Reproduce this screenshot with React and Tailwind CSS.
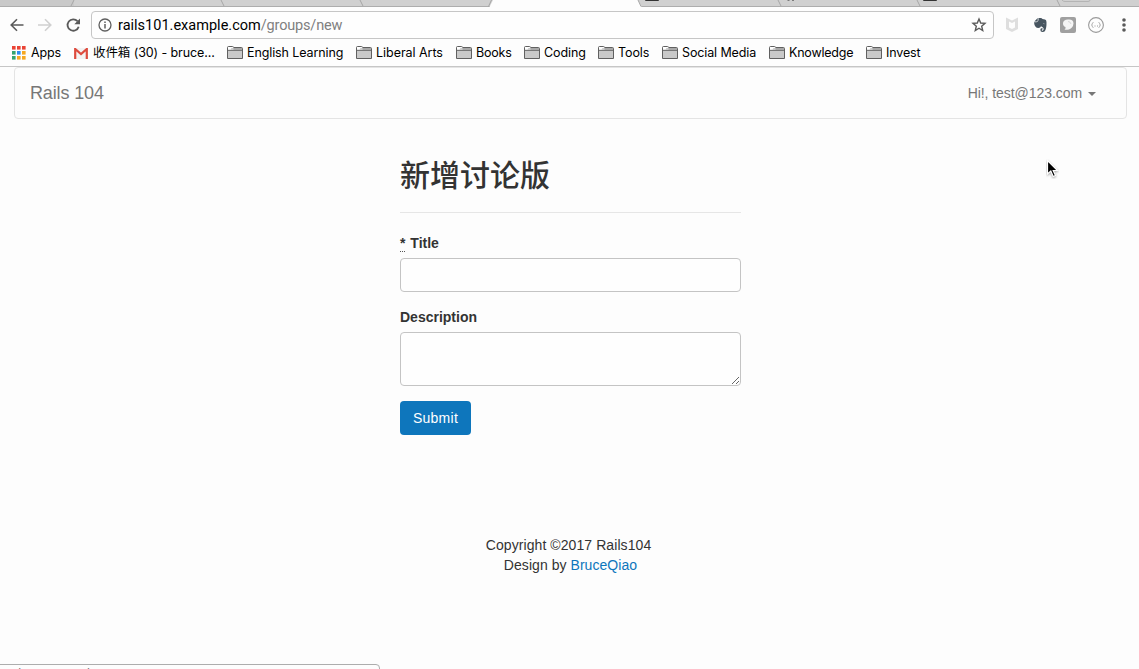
import React from "react";

const folders = [
  { label: "English Learning", width: "w-[129px]", track: "tracking-[-0.1px]" },
  { label: "Liberal Arts", width: "w-[100px]", track: "tracking-[-0.04px]" },
  { label: "Books", width: "w-[68px]", track: "tracking-[-0.2px]" },
  { label: "Coding", width: "w-[74px]", track: "tracking-[-0.1px]" },
  { label: "Tools", width: "w-[64px]", track: "tracking-[-0.1px]" },
  { label: "Social Media", width: "w-[107px]", track: "tracking-[-0.12px]" },
  { label: "Knowledge", width: "w-[97px]", track: "tracking-[-0.22px]" },
  { label: "Invest", width: "w-[70px]", track: "tracking-[-0.15px]" },
];

function TabStrip() {
  return (
    <svg className="block h-[7px] w-full shrink-0" viewBox="0 0 1139 7" aria-hidden="true">
      <rect width="1139" height="7" fill="#d0d0d0" />
      <rect width="74" height="6" fill="#c9c9c9" />
      <path d="M0 6.500H1139" stroke="#adadad" />
      <path d="M489.500 7L493 0H638L641.500 7Z" fill="#fdfdfd" />
      <path d="M71 6L74 0M221 0L224 6M360 0L363 6M488.500 6.500L491.500 0M638 0L641 6.500M778 0L781 6M917 0L920 6M1057 0L1060 6" fill="none" stroke="#a6a6a6" />
      <path d="M645 0h14v0.500q-1 .5-2 .5h-10q-1 0-2-.5zM923 0h14v0.500q-1 .5-2 .5h-10q-1 0-2-.5z" fill="#333" />
      <path d="M787.500 .3h2M792 .3h2" stroke="#666" />
      <path d="M1062 0q1 1.500 3 1.500h23q2 0 2-1.500" fill="none" stroke="#b4b4b4" />
    </svg>
  );
}

function FolderIcon() {
  return (
    <svg className="mb-px block h-[13px] w-4 shrink-0" viewBox="0 0 16 13" aria-hidden="true">
      <path d="M.5 12.500V1.500Q.5.500 1.500.500H5.500L7 1.500H14.500Q15.500 1.500 15.500 2.500V12.500Z" fill="#c9c9c9" stroke="#606060" />
      <path d="M6.500 2H15V4H6.500Z" fill="#a8a8a8" />
      <path d="M1 3.500V1H5.500L6.500 2H4.500L3.500 3.500Z" fill="#fff" />
      <path d="M1 4.500H15" stroke="#777" />
    </svg>
  );
}

function AppsIcon() {
  const colors = ["#ea4335", "#ea4335", "#ea4335", "#34a46f", "#2d8cf0", "#f6a821", "#34a46f", "#f6a821", "#f6a821"];
  return (
    <svg className="mb-px block h-[14px] w-[14px] shrink-0" viewBox="0 0 14 14" aria-hidden="true">
      {colors.map((c, i) => (
        <rect key={i} x={(i % 3) * 5} y={Math.floor(i / 3) * 5} width="3.600" height="3.600" fill={c} />
      ))}
    </svg>
  );
}

function Toolbar() {
  return (
    <div className="flex h-[33px] shrink-0 items-start pt-1">
      <svg className="block h-7 w-[91px] shrink-0" viewBox="0 0 91 28" fill="none" aria-hidden="true">
        <path d="M23.500 14H11.500M17 8.200L11.200 14L17 19.800" stroke="#5a5a5a" strokeWidth="1.600" />
        <path d="M38 14H50.500M45 8.200L50.800 14L45 19.800" stroke="#d0d0d0" strokeWidth="1.600" />
        <path d="M77.500 10.200A5.700 5.700 0 1 0 78.700 15.700" stroke="#5a5a5a" strokeWidth="1.800" />
        <path d="M80 7.500V13.200H74.300Z" fill="#5a5a5a" />
      </svg>
      <div className="flex h-7 w-[903px] shrink-0 items-center rounded-[4px] border border-[#c6c6c6] bg-[#fefefe] pl-[6px] pr-[6px]">
        <svg className="block h-[14px] w-[14px]" viewBox="0 0 14 14" fill="none" aria-hidden="true">
          <circle cx="7" cy="7" r="6" stroke="#5f5f5f" strokeWidth="1.300" />
          <path d="M7 6V10.500M7 3.500V5" stroke="#5f5f5f" strokeWidth="1.500" />
        </svg>
        <div className="ml-[6px] flex-1 whitespace-nowrap pt-px font-[Roboto,sans-serif] text-[14.500px] leading-[20px] text-black">
          <span className="tracking-[0.01px]">rails101.example.com</span>
          <span className="tracking-[-0.17px] text-[#808080]">/groups/new</span>
        </div>
        <svg className="block h-4 w-4" viewBox="0 0 16 16" fill="none" aria-hidden="true">
          <path d="M8 2L9.700 6L14 6.400L10.700 9.200L11.700 13.500L8 11.200L4.300 13.500L5.300 9.200L2 6.400L6.300 6Z" stroke="#5a5a5a" strokeWidth="1.400" />
        </svg>
      </div>
      <svg className="block h-7 w-[145px] shrink-0" viewBox="0 0 145 28" fill="none" aria-hidden="true">
        <path d="M12 6.500L18 9.500L24 6.500V18L18 21L12 18Z" fill="#dedede" />
        <path d="M15 10.500L18 12L21 10.500V16.500L18 18L15 16.500Z" fill="#fdfdfd" />
        <path d="M43.500 7.200L40.300 10.400H43Q43.700 10.400 43.700 9.700V7H46.500Q48 7 48.500 8L51 8.500Q52.400 8.800 52.500 11Q52.700 17 51 20Q50.300 21 48.500 21Q46.300 21 46.300 18.800Q46.300 17 48.500 17V18.500Q47.600 18.500 47.700 19.200Q48 20 49 19.500Q50 18.800 49.500 17.200Q48.400 15.800 47 15.200Q46.500 17 44.500 17Q40.500 17 40 11.200L42.500 11.200Q44.400 11 44.500 9V7Z" fill="#475560" />
        <path d="M48.800 12.800Q50.200 11.500 50.700 13.200Z" fill="#aeb5ba" />
        <rect x="66" y="6" width="16" height="16" rx="2" fill="#a0a0a0" />
        <path d="M69 12Q69.500 8.500 74 8.500Q79.500 8 79.500 12.500Q79 17 75 18.500Q72 19 70.500 18.500Q72 17.500 71.500 16Q68.800 15 69 12Z" fill="#f5f5f5" />
        <path d="M74 10.500Q76.500 10.500 77 13" stroke="#d7d7d7" />
        <circle cx="102" cy="14" r="7.400" stroke="#9a9a9a" strokeWidth="1.100" />
        <path d="M99.500 11.500Q98.300 11.500 98.300 12.700Q98.300 14 97.500 14Q98.300 14 98.300 15.300Q98.300 16.500 99.500 16.500M104.500 11.500Q105.700 11.500 105.700 12.700Q105.700 14 106.500 14Q105.700 14 105.700 15.300Q105.700 16.500 104.500 16.500" stroke="#9a9a9a" strokeWidth=".8" />
        <path d="M100.500 15h1M103 15h1" stroke="#999" />
        <g fill="#5a5a5a"><circle cx="130" cy="9" r="1.800" /><circle cx="130" cy="14" r="1.800" /><circle cx="130" cy="19" r="1.800" /></g>
      </svg>
    </div>
  );
}

function Bookmarks() {
  return (
    <div className="flex h-[27px] shrink-0 items-center border-b border-[#c6c6c6] pl-3 font-[Inter,'Noto_Sans_CJK_SC',sans-serif] text-[12.500px] leading-[18px] text-black">
      <div className="flex w-[62px] shrink-0 items-center">
        <AppsIcon />
        <span className="ml-[5px] tracking-[-0.15px]">Apps</span>
      </div>
      <div className="flex w-[153px] shrink-0 items-center whitespace-nowrap">
        <svg className="block h-[11px] w-[14px] shrink-0" viewBox="0 0 14 11" aria-hidden="true">
          <path d="M1 0H13V11H1Z" fill="#f3f3f3" />
          <path d="M1.200 11V1L7 6L12.800 1V11" fill="none" stroke="#dd4b3e" strokeWidth="2.200" />
        </svg>
        <span className="ml-[5px] tracking-[-0.09px]">收件箱 (30) - bruce...</span>
      </div>
      {folders.map((f) => (
        <div key={f.label} className={`flex shrink-0 items-center whitespace-nowrap ${f.width}`}>
          <FolderIcon />
          <span className={`ml-1 ${f.track}`}>{f.label}</span>
        </div>
      ))}
    </div>
  );
}

export default function App() {
  return (
    <div className="relative flex h-[669px] w-[1139px] flex-col overflow-hidden bg-[#fdfdfd] font-['Liberation_Sans',sans-serif] text-[14px] leading-5 text-[#333]">
      <TabStrip />
      <Toolbar />
      <Bookmarks />
      <nav className="ml-[14px] flex h-[52px] w-[1113px] shrink-0 items-center justify-between rounded-[4px] border border-[#e4e4e4] pl-[15px] pr-[30px] text-[#777]">
        <a className="text-[18px] leading-5 tracking-[-0.13px]">Rails 104</a>
        <a className="flex items-center gap-[6px]">
          <span className="tracking-[-0.06px]">Hi!, test@123.com</span>
          <svg className="mt-[2px] block h-1 w-2" viewBox="0 0 8 4" aria-hidden="true"><path d="M0 0H8L4 4Z" fill="#777" /></svg>
        </a>
      </nav>
      <main className="ml-[400px] w-[341px] shrink-0 pt-[38px]">
        <h2 className="h-[33px] whitespace-nowrap font-['Noto_Sans_CJK_SC',sans-serif] text-[30px] font-medium leading-[33px]">新增讨论版</h2>
        <hr className="mt-[22px] border-[#e6e6e6]" />
        <form className="mt-5">
          <label className="block h-5 font-bold">
            <abbr className="mr-px inline-block h-[19px] border-b border-dotted border-[#555] leading-5 no-underline">*</abbr> Title
          </label>
          <input className="mt-[5px] block h-[34px] w-full rounded-[4px] border border-[#c4c4c4] bg-[#fefefe] px-3" />
          <label className="mt-[15px] block h-5 font-bold">Description</label>
          <textarea className="mt-[5px] block h-[54px] w-full rounded-[4px] border border-[#c4c4c4] bg-[#fefefe] px-3 py-[6px]" />
          <button type="button" className="mt-[15px] block h-[34px] w-[71px] rounded-[4px] bg-[#0e76bc] tracking-[0.25px] text-white">Submit</button>
        </form>
      </main>
      <footer className="mt-[100px] w-[1137px] shrink-0 text-center">
        <p className="tracking-[0.08px]">Copyright ©2017 Rails104</p>
        <p className="pl-[4px] tracking-[0.05px]">Design by <a className="text-[#0e76bc]">BruceQiao</a></p>
      </footer>
      <div className="absolute left-[-1px] top-[664px] h-[22px] w-[381px] rounded-tr-[4px] border border-[#adadad] bg-[#fdfdfd] pl-[5px] font-[Roboto,sans-serif] text-[12px] leading-[18px] text-[#777]">rails101.example.com</div>
      <svg className="absolute left-[1046px] top-[159px] h-[20px] w-[13px]" viewBox="0 0 13 20" aria-hidden="true">
        <path d="M1.500 1.500V15L4.800 12L7.200 17.500L9.500 16.500L7.200 11.500H11.500Z" fill="#000" stroke="#fff" strokeWidth="1.200" className="drop-shadow-[0_1px_1px_rgba(0,0,0,0.35)]" />
      </svg>
    </div>
  );
}
